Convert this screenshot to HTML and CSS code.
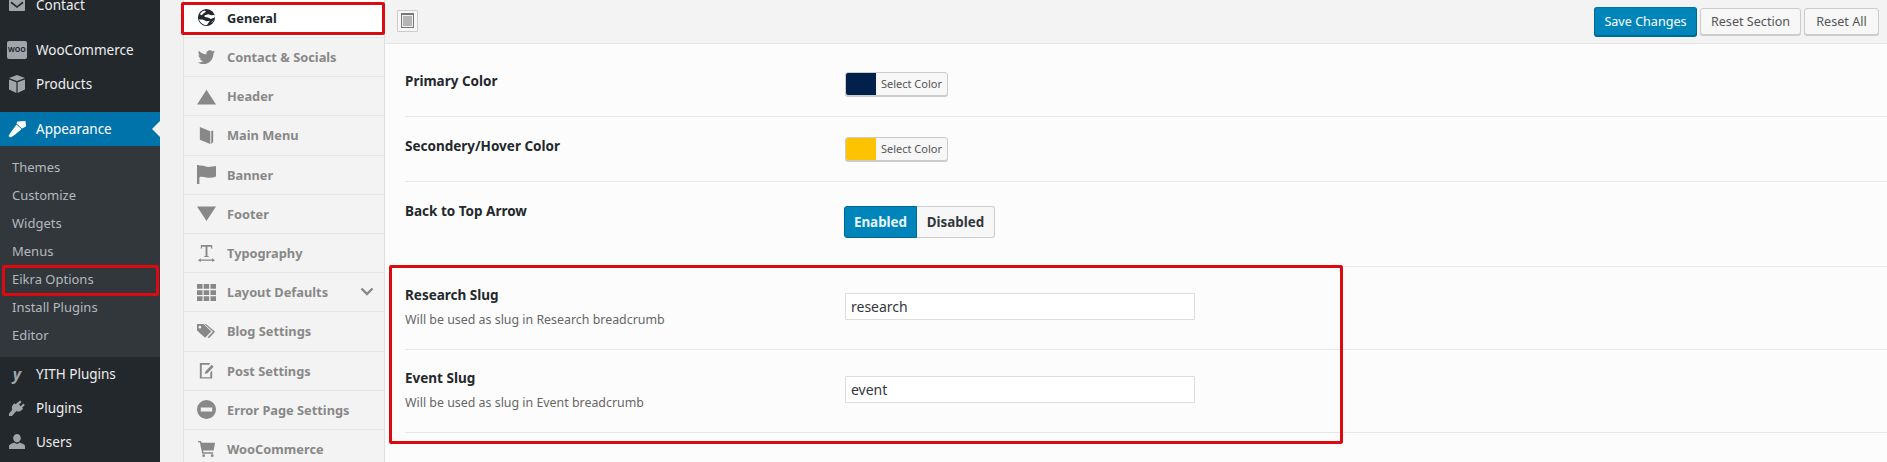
FILE: index.html
```html
<!DOCTYPE html>
<html lang="en">
<head>
  <meta charset="UTF-8">
  <title>Eikra Options</title>
  <link rel="stylesheet" href="styles.css">
</head>
<body>
  <aside class="admin-menu">
    <ul class="menu-list menu-top">
      <li class="menu-item">
        <svg class="menu-icon" viewBox="0 0 20 20"><path d="M3 4h14c.6 0 1 .4 1 1v10c0 .6-.4 1-1 1H3c-.6 0-1-.4-1-1V5c0-.6.4-1 1-1zm7 7L4.500 6.500 3.500 8l6.500 5 6.500-5-1-1.500z"/></svg>
        <span>Contact</span>
      </li>
    </ul>
    <ul class="menu-list">
      <li class="menu-item">
        <span class="woo-icon">WOO</span>
        <span>WooCommerce</span>
      </li>
      <li class="menu-item">
        <svg class="menu-icon" viewBox="0 0 20 20"><path d="M10 1l8 3-8 3-8-3zM2 5.500l7.400 2.800V19L2 15.500zM18 5.500v10L10.600 19V8.300z"/></svg>
        <span>Products</span>
      </li>
    </ul>
    <ul class="menu-list">
      <li class="menu-item is-current">
        <svg class="menu-icon" viewBox="0 0 20 20"><path d="M10.500 2.500l8-.5.500 5.500-4 2-5.500-5zM9.500 5.500l5 4.500-1.500 1.500-5.500 4.500-4 2.500-2-1.500 2.500-4z"/></svg>
        <span>Appearance</span>
      </li>
      <li class="submenu">
        <a>Themes</a>
        <a>Customize</a>
        <a>Widgets</a>
        <a>Menus</a>
        <a>Eikra Options</a>
        <a>Install Plugins</a>
        <a>Editor</a>
      </li>
      <li class="menu-item">
        <span class="yith-icon">y</span>
        <span>YITH Plugins</span>
      </li>
      <li class="menu-item">
        <svg class="menu-icon" viewBox="0 0 20 20"><path d="M13.100 2.500l1.500 1.400-2.600 2.700 1.700 1.600 2.700-2.600 1.400 1.500-2.700 2.600 1 1-1.600 1.600c-1.400 1.400-3.500 1.600-5.100.6L5 18H2v-2.500l3.300-3.700c-.9-1.600-.7-3.600.7-5l1.500-1.500 1 1z"/></svg>
        <span>Plugins</span>
      </li>
      <li class="menu-item">
        <svg class="menu-icon" viewBox="0 0 20 20"><path d="M10 2c2.200 0 3.800 1.800 3.800 4s-1.600 4.500-3.800 4.500S6.200 8.200 6.200 6 7.800 2 10 2zM2 17v-2.500c0-1.500 1-2.300 2.300-2.800l3.200-1.200c.7.800 1.500 1.300 2.500 1.300s1.800-.5 2.500-1.300l3.200 1.200c1.300.5 2.300 1.300 2.300 2.800V17z"/></svg>
        <span>Users</span>
      </li>
    </ul>
  </aside>

  <div class="options-panel">
    <nav class="tabs">
      <div class="tab is-active">
        <svg class="tab-icon" viewBox="0 0 20 20"><path d="M10 1a9 9 0 1 0 0 18 9 9 0 0 0 0-18zM3 6.500c1-2 3-3.500 5-4l1.500 1.500-2.500 1.500-2 2zm5 1l4-1 3 1 3.200-.2c.3 1 .5 1.700.5 2.700l-4.200 1.500-3-1.500-3.500-.5zM2 12l4 0 4 2 3.500-.5-3 4.500c-3.500.3-7-2.500-8.500-6zm13 3.500l2.500-3c-.5 1.500-1.300 2.600-2.500 3z"/></svg>
        <span>General</span>
      </div>
      <div class="tab">
        <svg class="tab-icon" viewBox="0 0 24 24"><path d="M23 4.900c-.8.400-1.700.6-2.600.7.900-.6 1.600-1.400 2-2.500-.9.500-1.800.9-2.900 1.100-.8-.9-2-1.500-3.300-1.500-2.500 0-4.500 2-4.500 4.500 0 .4 0 .7.100 1C8 8 4.700 6.200 2.500 3.500c-.4.700-.6 1.400-.6 2.300 0 1.600.8 2.900 2 3.700-.7 0-1.400-.2-2-.6 0 2.200 1.500 4 3.600 4.400-.4.100-.8.2-1.200.2-.3 0-.6 0-.8-.1.600 1.800 2.200 3.100 4.200 3.100-1.500 1.200-3.500 1.900-5.600 1.900-.4 0-.7 0-1.100-.1 2 1.300 4.400 2 6.900 2 8.300 0 12.800-6.900 12.800-12.800v-.6c.9-.6 1.600-1.400 2.300-2.300z"/></svg>
        <span>Contact &amp; Socials</span>
      </div>
      <div class="tab">
        <svg class="tab-icon" viewBox="0 0 20 20"><path d="M10 3l10 15.500H0z"/></svg>
        <span>Header</span>
      </div>
      <div class="tab">
        <svg class="tab-icon" viewBox="0 0 20 20"><path d="M3 1l11 4.500V19L3 14.500zM15 5.500l2-1V17l-2 2z"/></svg>
        <span>Main Menu</span>
      </div>
      <div class="tab">
        <svg class="tab-icon" viewBox="0 0 20 20"><path d="M0 0h2.500v1c4-1.500 6 1 9.500 1 3 0 5.500-1 8-1v11c-2 1-4.500 1.500-8 1.500s-5.500-2-9.500-.5v7H0z"/></svg>
        <span>Banner</span>
      </div>
      <div class="tab">
        <svg class="tab-icon" viewBox="0 0 20 20"><path d="M0 2.500h20L10 18z"/></svg>
        <span>Footer</span>
      </div>
      <div class="tab">
        <svg class="tab-icon" viewBox="0 0 20 20"><path d="M4 1h12v4h-.8l-.6-2.200H11V12.500l1.500.5v.8h-5V13l1.500-.5V2.800H5.400L4.800 5H4zM4 15v1.300h12V15l3 2-3 2v-1.300H4V19l-3-2z"/></svg>
        <span>Typography</span>
      </div>
      <div class="tab">
        <svg class="tab-icon" viewBox="0 0 20 20"><path d="M0 1h5.800v5H0zM7 1h5.800v5H7zM14.200 1H20v5h-5.800zM0 7.500h5.800v5H0zM7 7.500h5.800v5H7zM14.200 7.500H20v5h-5.800zM0 14h5.800v5H0zM7 14h5.800v5H7zM14.200 14H20v5h-5.800z"/></svg>
        <span>Layout Defaults</span>
        <svg class="tab-arrow" viewBox="0 0 14 10"><path d="M1.500 1.500L7 7l5.500-5.500" fill="none" stroke="currentColor" stroke-width="2.400"/></svg>
      </div>
      <div class="tab">
        <svg class="tab-icon" viewBox="0 0 20 20"><path d="M0 2h7l8 8-6.500 6.500L0 9zM3 4a1.400 1.400 0 1 0 0 2.800A1.400 1.400 0 0 0 3 4zM9.500 2l9.500 8.300-6.500 6.700-1.300-1 5.500-5.700L8 2z"/></svg>
        <span>Blog Settings</span>
      </div>
      <div class="tab">
        <svg class="tab-icon" viewBox="0 0 20 20"><path d="M3 2h10l1 .8-1.300 1.200H5v13h9v-5l2-2v8.500H3zM15.500 4l2 2-6.500 6.800-3 1 1-3z"/></svg>
        <span>Post Settings</span>
      </div>
      <div class="tab">
        <svg class="tab-icon" viewBox="0 0 20 20"><path d="M10 0a10 10 0 1 1 0 20 10 10 0 0 1 0-20zM4 8v4h12V8z"/></svg>
        <span>Error Page Settings</span>
      </div>
      <div class="tab">
        <svg class="tab-icon" viewBox="0 0 20 20"><path d="M1 2h3l1 2h14l-1.500 8H6.500l.3 2H17v1.500H5.500L3 3.500H1zM7 16a1.500 1.500 0 1 1 0 3 1.500 1.500 0 0 1 0-3zm9 0a1.500 1.500 0 1 1 0 3 1.500 1.500 0 0 1 0-3z"/></svg>
        <span>WooCommerce</span>
      </div>
    </nav>

    <main class="options-main">
      <div class="action-bar">
        <span class="view-toggle"><i></i></span>
        <div class="actions">
          <button class="btn btn-primary">Save Changes</button>
          <button class="btn btn-section">Reset Section</button>
          <button class="btn btn-all">Reset All</button>
        </div>
      </div>

      <div class="fields">
        <div class="field">
          <div class="field-label"><h4>Primary Color</h4></div>
          <div class="picker">
            <span class="swatch swatch-navy"></span>
            <span class="picker-text">Select Color</span>
          </div>
        </div>
        <div class="field">
          <div class="field-label"><h4>Secondery/Hover Color</h4></div>
          <div class="picker">
            <span class="swatch swatch-yellow"></span>
            <span class="picker-text">Select Color</span>
          </div>
        </div>
        <div class="field">
          <div class="field-label"><h4>Back to Top Arrow</h4></div>
          <div class="switch">
            <span class="switch-on">Enabled</span>
            <span class="switch-off">Disabled</span>
          </div>
        </div>
        <div class="field field-slug">
          <div class="field-label">
            <h4>Research Slug</h4>
            <p>Will be used as slug in Research breadcrumb</p>
          </div>
          <input class="text-input" type="text" value="research">
        </div>
        <div class="field field-slug">
          <div class="field-label">
            <h4>Event Slug</h4>
            <p>Will be used as slug in Event breadcrumb</p>
          </div>
          <input class="text-input" type="text" value="event">
        </div>
      </div>
    </main>
  </div>

  <!-- red annotation boxes drawn over the screenshot -->
  <div class="mark mark-menu"></div>
  <div class="mark mark-tab"></div>
  <div class="mark mark-fields"></div>
</body>
</html>
```

FILE: styles.css
```css
* { box-sizing: border-box; }
html, body { height: 100%; }
body { margin: 0; height: 462px; overflow: hidden; display: flex; background: #f1f1f1; font-family: "Noto Sans", "Open Sans", sans-serif; font-size: 13px; color: #444; position: relative; }

/* admin sidebar */
.admin-menu { width: 160px; flex: none; background: #23282d; color: #eee; display: flex; flex-direction: column; margin-top: -12px; height: 474px; overflow: hidden; }
.menu-list { list-style: none; margin: 0 0 11px; padding: 0; }
.menu-item { height: 34px; display: flex; align-items: center; gap: 10px; padding-left: 8px; font-size: 13.5px; position: relative; }
.menu-item > span:last-child { margin-top: -1px; }
.menu-icon { width: 20px; height: 20px; flex: none; fill: #a0a5aa; margin-left: -1px; margin-right: -1px; }
.woo-icon { width: 20px; height: 18px; flex: none; background: #a0a5aa; color: #23282d; border-radius: 2px; font-size: 7px; font-weight: 700; line-height: 18px; text-align: center; margin-left: -1px; margin-right: -1px; }
.yith-icon { width: 18px; flex: none; color: #a0a5aa; font-size: 16px; font-weight: 700; font-style: italic; text-align: center; line-height: 20px; }
.menu-item.is-current { background: #0073aa; color: #fff; }
.menu-item.is-current .menu-icon { fill: #fff; }
.menu-item.is-current::after { content: ""; position: absolute; right: 0; top: 50%; margin-top: -8px; border: 8px solid transparent; border-right-color: #f1f1f1; border-left-width: 0; }
.submenu { background: #32373c; padding: 7px 0 8px; display: flex; flex-direction: column; }
.submenu a { height: 28px; line-height: 28px; padding-left: 12px; color: #b4b9be; font-size: 13px; }

/* options panel */
.options-panel { flex: 1; margin-left: 23px; display: flex; min-width: 0; }
.tabs { width: 202px; flex: none; background: #f3f3f3; border-left: 1px solid #e2e2e2; border-right: 1px solid #dedede; }
.tab { height: 39.2px; display: flex; align-items: center; padding: 0 10px 0 13px; gap: 11px; border-bottom: 1px solid #e7e7e7; color: #888; font-size: 12.8px; font-weight: 700; }
.tab:first-child { margin-top: -2px; height: 40px; background: #fff; color: #23282d; padding-bottom: 0; }
.tab-icon { width: 19px; height: 19px; flex: none; fill: currentColor; }
.tab-arrow { width: 14px; height: 10px; margin-left: auto; color: #888; }

.options-main { flex: 1; min-width: 0; background: #fcfcfc; display: flex; flex-direction: column; }
.action-bar { height: 44px; flex: none; background: #f3f3f3; border-bottom: 1px solid #e4e4e4; display: flex; align-items: center; justify-content: space-between; padding: 0 8px 0 12px; }
.view-toggle { width: 21px; height: 22px; margin-top: -2px; border: 1px solid #ccc; border-radius: 1px; background: #f7f7f7; display: flex; align-items: center; justify-content: center; }
.view-toggle i { display: block; width: 13px; height: 15px; border: 1px solid #777; border-top-width: 2px; background: #b5b5b5; box-shadow: inset 0 0 0 1px #eee; }
.actions { display: flex; align-items: center; gap: 3px; }
.btn { width: 101px; height: 27px; padding: 0; border: 1px solid #ccc; border-radius: 3px; background: #f7f7f7; box-shadow: 0 1px 0 #ccc; color: #555; font: 12.6px "Noto Sans", "Open Sans", sans-serif; }
.btn-primary { width: 103px; height: 29px; background: #0085ba; border-color: #0073aa #006799 #006799; box-shadow: 0 1px 0 #006799; color: #fff; }
.btn-all { width: 75px; }

.fields { padding: 8px 0 0 20px; }
.field { display: flex; padding: 20px 0; border-bottom: 1px solid #e7e7e7; }
.field-label { width: 440px; flex: none; }
.field h4 { margin: 0; font-size: 13.5px; line-height: 18px; font-weight: 700; color: #23282d; }
.field-slug h4 { margin-top: -1px; }
.field p { margin: 7px 0 0; font-size: 12.4px; line-height: 18px; color: #666; }

.picker { width: 103px; height: 24px; display: flex; border: 1px solid #ccc; border-radius: 3px; background: #f7f7f7; box-shadow: 0 1px 0 #ccc; overflow: hidden; }
.swatch { width: 30px; flex: none; }
.swatch-navy { background: #01214a; }
.swatch-yellow { background: #fdc300; }
.picker-text { flex: 1; text-align: center; font-size: 11px; line-height: 22px; color: #555; }

.switch { display: flex; height: 32px; margin: 4px 0 8px -1px; font-size: 13.4px; font-weight: 700; line-height: 30px; }
.switch-on { width: 73px; text-align: center; background: #0085ba; border: 1px solid #006799; border-radius: 3px 0 0 3px; color: #e6f5fb; }
.switch-off { width: 78px; text-align: center; background: #f7f7f7; border: 1px solid #ccc; border-left: 0; border-radius: 0 3px 3px 0; color: #32373c; }

.text-input { width: 350px; height: 27px; margin: 6px 0 0; padding: 0 5px; border: 1px solid #ddd; border-radius: 1px; background: #fff; color: #32373c; font: 14px "Noto Sans", "Open Sans", sans-serif; }

/* annotations */
.mark { position: absolute; border: 3px solid #dc0b12; border-radius: 2px; }
.mark-menu { left: 2px; top: 265px; width: 157px; height: 31px; }
.mark-tab { left: 181px; top: 2px; width: 204px; height: 33px; }
.mark-fields { left: 389px; top: 265px; width: 954px; height: 179px; }
```
